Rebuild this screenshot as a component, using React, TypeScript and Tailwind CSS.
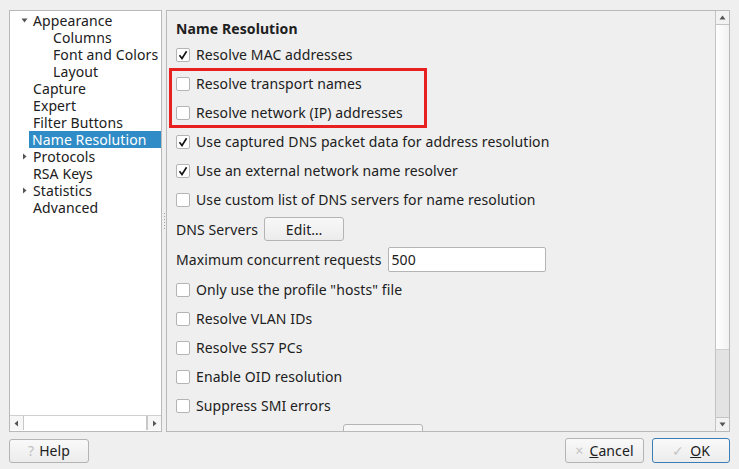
import React from 'react';

const treeItems = [
  { label: 'Appearance', level: 0, arrow: 'down' },
  { label: 'Columns', level: 1 },
  { label: 'Font and Colors', level: 1 },
  { label: 'Layout', level: 1 },
  { label: 'Capture', level: 0 },
  { label: 'Expert', level: 0 },
  { label: 'Filter Buttons', level: 0 },
  { label: 'Name Resolution', level: 0, selected: true },
  { label: 'Protocols', level: 0, arrow: 'right' },
  { label: 'RSA Keys', level: 0 },
  { label: 'Statistics', level: 0, arrow: 'right' },
  { label: 'Advanced', level: 0 },
];

const Check: React.FC<{ checked?: boolean }> = ({ checked }) => (
  <div className="w-[14px] h-[14px] shrink-0 bg-white border border-[#b4b4b4] rounded-[2px] flex items-center justify-center">
    {checked && (
      <svg width="10" height="10" viewBox="0 0 10 10">
        <path d="M1.5 5.2 L4 8.5 L8.6 1.2" fill="none" stroke="#111" strokeWidth="1.6" />
      </svg>
    )}
  </div>
);

const CheckRow: React.FC<{ label: string; checked?: boolean }> = ({ label, checked }) => (
  <div className="h-[29px] flex items-center gap-[6px] shrink-0">
    <Check checked={checked} />
    <span className="whitespace-nowrap">{label}</span>
  </div>
);

const Arrow: React.FC<{ dir: 'up' | 'down' | 'left' | 'right'; size?: number }> = ({ dir, size = 7 }) => {
  const paths = {
    up: 'M0.5 5.5 L3.5 1.5 L6.5 5.5 Z',
    down: 'M0.5 1.5 L3.5 5.5 L6.5 1.5 Z',
    left: 'M5 0.5 L1.5 3.5 L5 6.5 Z',
    right: 'M2 0.5 L5.5 3.5 L2 6.5 Z',
  };
  return (
    <svg width={size} height={size} viewBox="0 0 7 7">
      <path d={paths[dir]} fill="#555" />
    </svg>
  );
};

const App: React.FC = () => {
  return (
    <div
      className="w-[739px] h-[469px] bg-[#efefef] text-[14px] tracking-[0.1px] text-[#202020] flex flex-col overflow-hidden"
      style={{ fontFamily: '"Noto Sans", "Open Sans", sans-serif' }}
    >
      <div className="flex pl-[9px] pt-[10px] h-[432px]">
        {/* tree */}
        <div className="w-[153px] h-full bg-white border border-[#b9b9b9] flex flex-col overflow-hidden">
          <div className="flex-1 pt-[1px] leading-[17px]">
            {treeItems.map((item, i) => (
              <div key={i} className="h-[17px] flex items-center relative">
                <div className="w-[19px] flex justify-end pr-[1px] shrink-0">
                  {item.arrow === 'down' && <Arrow dir="down" />}
                  {item.arrow === 'right' && <Arrow dir="right" />}
                </div>
                <div
                  className={
                    item.selected
                      ? 'flex-1 h-full flex items-center bg-[#308cc6] text-white pl-[3px]'
                      : 'flex-1 h-full flex items-center pl-[4px]'
                  }
                >
                  <span className={item.level === 1 ? 'pl-[20px] whitespace-nowrap' : 'whitespace-nowrap'}>
                    {item.label}
                  </span>
                </div>
              </div>
            ))}
          </div>
          <div className="h-[15px] mb-[1px] flex border-t border-[#d0d0d0] bg-[#f6f6f6] shrink-0">
            <div className="w-[14px] flex items-center justify-center border-r border-[#c8c8c8]">
              <Arrow dir="left" />
            </div>
            <div className="flex-1 bg-white border-r border-[#c8c8c8]" />
            <div className="w-[14px] flex items-center justify-center border-l border-[#c8c8c8]">
              <Arrow dir="right" />
            </div>
          </div>
        </div>

        {/* splitter */}
        <div className="w-[4px] flex flex-col items-center justify-center gap-[2px]">
          {[0, 1, 2, 3, 4, 5].map((d) => (
            <div key={d} className="w-[1px] h-[1px] bg-[#a0a0a0]" />
          ))}
        </div>

        {/* settings pane */}
        <div className="w-[564px] h-full border border-[#b9b9b9] flex">
          <div className="flex-1 overflow-hidden pl-[9px] pt-[8px] flex flex-col">
            <div className="h-[19px] flex items-center font-bold shrink-0">Name Resolution</div>
            <div className="h-[2px] shrink-0" />
            <CheckRow label="Resolve MAC addresses" checked />
            <div className="relative shrink-0">
              <div className="absolute left-[-7px] top-[-1px] w-[258px] h-[60px] border-[3px] border-[#e8201f]" />
              <CheckRow label="Resolve transport names" />
              <CheckRow label="Resolve network (IP) addresses" />
            </div>
            <CheckRow label="Use captured DNS packet data for address resolution" checked />
            <CheckRow label="Use an external network name resolver" checked />
            <CheckRow label="Use custom list of DNS servers for name resolution" />
            <div className="h-[30px] flex items-center gap-[6px] shrink-0">
              <span>DNS Servers</span>
              <button className="w-[80px] h-[24px] rounded-[3px] border border-[#b4b4b4] bg-gradient-to-b from-[#f8f8f8] to-[#ececec]">
                Edit…
              </button>
            </div>
            <div className="h-[31px] flex items-center gap-[6px] shrink-0">
              <span>Maximum concurrent requests</span>
              <div className="w-[158px] h-[25px] bg-white border border-[#b4b4b4] rounded-[2px] flex items-center pl-[3px]">
                500
              </div>
            </div>
            <CheckRow label={'Only use the profile "hosts" file'} />
            <CheckRow label="Resolve VLAN IDs" />
            <CheckRow label="Resolve SS7 PCs" />
            <CheckRow label="Enable OID resolution" />
            <CheckRow label="Suppress SMI errors" />
            <div className="h-[29px] flex items-start gap-[6px] shrink-0 pt-[4px]">
              <span className="pt-[5px] whitespace-nowrap">SMI (MIB and PIB) paths</span>
              <button className="w-[80px] h-[24px] rounded-[3px] border border-[#b4b4b4] bg-[#f6f6f6]">Edit…</button>
            </div>
          </div>
          {/* vertical scrollbar */}
          <div className="w-[14px] h-full border-l border-[#c4c4c4] flex flex-col">
            <div className="h-[14px] flex items-center justify-center border-b border-[#c4c4c4] bg-[#f2f2f2]">
              <Arrow dir="up" />
            </div>
            <div className="h-[324px] bg-gradient-to-r from-[#ffffff] to-[#f2f2f2]" />
            <div className="flex-1 bg-[#e3e3e3] border-t border-[#d0d0d0]" />
            <div className="h-[14px] flex items-center justify-center border-t border-[#c4c4c4] bg-[#f2f2f2]">
              <Arrow dir="down" />
            </div>
          </div>
        </div>
      </div>

      {/* buttons */}
      <div className="flex items-center justify-between pl-[9px] pr-[9px] pt-[6px]">
        <button className="w-[80px] h-[24px] rounded-[3px] border border-[#b4b4b4] bg-gradient-to-b from-[#f9f9f9] to-[#ececec] flex items-center justify-center gap-[5px]">
          <span className="text-[#c0c0c0]">?</span>
          <span>Help</span>
        </button>
        <div className="flex gap-[8px]">
          <button className="w-[79px] h-[25px] rounded-[3px] border border-[#b4b4b4] bg-gradient-to-b from-[#f9f9f9] to-[#ececec] flex items-center justify-center gap-[6px]">
            <span className="text-[#c4c4c4]">×</span>
            <span>
              <span className="underline">C</span>ancel
            </span>
          </button>
          <button className="w-[78px] h-[25px] rounded-[3px] border border-[#3b7eb5] bg-gradient-to-b from-[#f9f9f9] to-[#ececec] flex items-center justify-center gap-[6px]">
            <span className="text-[#c4c4c4]">✓</span>
            <span>
              <span className="underline">O</span>K
            </span>
          </button>
        </div>
      </div>
    </div>
  );
};

export default App;
